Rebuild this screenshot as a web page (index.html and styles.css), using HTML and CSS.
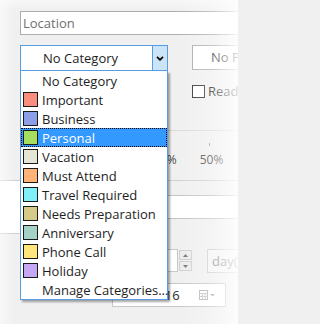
FILE: index.html
```html
<!DOCTYPE html>
<html>
<head>
<meta charset="utf-8">
<link rel="stylesheet" href="styles.css">
</head>
<body>
<div class="page">
  <div class="location">Location</div>

  <div class="row2">
    <div class="combo">
      <div class="combo-text">No Category</div>
      <div class="combo-btn">
        <svg width="8" height="5" viewBox="0 0 8 5"><path d="M1 0.8 L4 3.8 L7 0.8" fill="none" stroke="#000" stroke-width="1.8"/></svg>
      </div>
    </div>
    <div class="combo2">No Priority</div>
  </div>

  <div class="row3">
    <span class="check"></span><span class="check-label">Read</span>
  </div>

  <div class="slider">
    <div class="tick"></div>
    <div class="labels"><span class="lbl l25">25%</span><span class="lbl l50">50%</span></div>
  </div>

  <div class="notes">
    <div class="note-left"></div>
    <div class="note-right"></div>
  </div>

  <div class="spin-row">
    <div class="spin-box"></div>
    <div class="spin-btns">
      <div class="spin-btn"><svg width="5" height="3" viewBox="0 0 5 3"><path d="M0 3 L2.5 0 L5 3Z" fill="#777"/></svg></div>
      <div class="spin-btn"><svg width="5" height="3" viewBox="0 0 5 3"><path d="M0 0 L2.5 3 L5 0Z" fill="#777"/></svg></div>
    </div>
    <div class="day-box">day(s)</div>
  </div>

  <div class="date-row">
    <div class="date-box">
      <span class="date-text">6/30/2016</span>
      <span class="cal">
        <svg width="17" height="10" viewBox="0 0 17 10">
          <rect x="0.5" y="0.5" width="8" height="9" fill="#fff" stroke="#b5b5b5"/>
          <path d="M0.5 3.5h8M0.5 6.5h8M3.5 3.5v6M6 3.5v6" stroke="#c8c8c8" stroke-width="1"/>
          <path d="M11 4 L13.5 6.5 L16 4Z" fill="#b0b0b0"/>
        </svg>
      </span>
    </div>
  </div>

  <div class="dropdown">
    <div class="item"><span class="sw none"></span>No Category</div>
    <div class="item"><span class="sw c-imp"></span>Important</div>
    <div class="item"><span class="sw c-bus"></span>Business</div>
    <div class="item sel"><span class="sw c-per"></span>Personal</div>
    <div class="item"><span class="sw c-vac"></span>Vacation</div>
    <div class="item"><span class="sw c-must"></span>Must Attend</div>
    <div class="item"><span class="sw c-trav"></span>Travel Required</div>
    <div class="item"><span class="sw c-need"></span>Needs Preparation</div>
    <div class="item"><span class="sw c-ann"></span>Anniversary</div>
    <div class="item"><span class="sw c-phone"></span>Phone Call</div>
    <div class="item"><span class="sw c-hol"></span>Holiday</div>
    <div class="item"><span class="sw none"></span>Manage Categories...</div>
  </div>

  <div class="fade"></div>
</div>
</body>
</html>
```

FILE: styles.css
```css
html, body {
  margin: 0;
  padding: 0;
  background: #f0f0f0;
}
.page {
  position: relative;
  width: 238px;
  height: 324px;
  overflow: hidden;
  padding-top: 11px;
  box-sizing: border-box;
  font-family: "Open Sans", "Noto Sans", sans-serif;
  font-size: 13px;
  color: #1e1e1e;
}
.location {
  margin-left: 20px;
  width: 240px;
  height: 24px;
  box-sizing: border-box;
  border: 1px solid #abadb3;
  background: #fff;
  color: #707070;
  padding-left: 2px;
  line-height: 22px;
}
.row2 {
  display: flex;
  gap: 24px;
  margin-top: 10px;
  margin-left: 20px;
  align-items: flex-start;
}
.combo {
  display: flex;
  width: 148px;
  height: 26px;
  box-sizing: border-box;
  border: 1px solid #569de5;
  background: #fff;
  flex: none;
}
.combo-text {
  flex: 1;
  padding-left: 22px;
  line-height: 24px;
}
.combo-btn {
  width: 14px;
  border-left: 1px solid #569de5;
  background: #cce4f7;
  display: flex;
  align-items: center;
  justify-content: center;
}
.combo2 {
  flex: none;
  width: 110px;
  height: 25px;
  box-sizing: border-box;
  border: 1px solid #adadad;
  background: #fff;
  padding-left: 18px;
  line-height: 23px;
  color: #2a2a2a;
  white-space: nowrap;
  overflow: hidden;
}
.row3 {
  display: flex;
  align-items: center;
  margin-top: 13px;
  margin-left: 192px;
  height: 14px;
}
.check {
  width: 13px;
  height: 13px;
  box-sizing: border-box;
  border: 1px solid #333;
  background: #fff;
  margin-right: 3px;
  flex: none;
}
.check-label {
  line-height: 14px;
  white-space: nowrap;
}
.slider {
  margin-top: 32px;
  margin-left: 30px;
  height: 50px;
  box-sizing: border-box;
  border-top: 1px solid #dadada;
}
.tick {
  margin-left: 179px;
  margin-top: 12px;
  width: 1px;
  height: 3px;
  background: #a0a0a0;
}
.labels {
  display: flex;
  margin-top: 6px;
  font-size: 12px;
  color: #4a4a4a;
  line-height: 16px;
}
.l25 { margin-left: 123px; }
.l50 { margin-left: 23px; }
.notes {
  display: flex;
  height: 54px;
  border-top: 1px solid #d0d0d0;
}
.note-left {
  flex: none;
  width: 60px;
  height: 52px;
  background: #fff;
  border-bottom: 1px solid #d0d0d0;
}
.note-right {
  flex: none;
  margin-left: 105px;
  margin-top: 14px;
  width: 80px;
  height: 24px;
  box-sizing: border-box;
  background: #fff;
  border-top: 1px solid #c4c4c4;
  border-bottom: 1px solid #c4c4c4;
}
.spin-row {
  display: flex;
  margin-top: 14px;
  margin-left: 100px;
  height: 24px;
}
.spin-box {
  flex: none;
  width: 78px;
  height: 23px;
  box-sizing: border-box;
  border: 1px solid #c8c8c8;
  background: #fff;
}
.spin-btns {
  flex: none;
  margin-left: 1px;
  margin-top: 1px;
  display: flex;
  flex-direction: column;
  gap: 1px;
}
.spin-btn {
  width: 13px;
  height: 10px;
  box-sizing: border-box;
  border: 1px solid #cfcfcf;
  background: #ececec;
  display: flex;
  align-items: center;
  justify-content: center;
}
.day-box {
  flex: none;
  margin-left: 15px;
  width: 60px;
  height: 24px;
  box-sizing: border-box;
  border: 1px solid #cfcfcf;
  background: #f4f4f4;
  color: #8a8a8a;
  padding-left: 4px;
  line-height: 22px;
  white-space: nowrap;
  overflow: hidden;
}
.date-row {
  margin-top: 10px;
  margin-left: 112px;
}
.date-box {
  width: 114px;
  height: 24px;
  box-sizing: border-box;
  border: 1px solid #c8c8c8;
  background: #fff;
  display: flex;
  align-items: center;
  padding-left: 5px;
}
.date-text {
  flex: 1;
  color: #2a2a2a;
  line-height: 22px;
}
.cal {
  display: flex;
  margin-right: 9px;
}
.dropdown {
  position: absolute;
  left: 20px;
  top: 71px;
  width: 148px;
  box-sizing: border-box;
  border: 1px solid #569de5;
  border-top: none;
  background: #fff;
  box-shadow: 2px 2px 2px rgba(0, 0, 0, 0.35);
}
.item {
  height: 19px;
  display: flex;
  align-items: center;
  padding-left: 2px;
  white-space: nowrap;
  color: #1e1e1e;
}
.item.sel {
  background: #3399ff;
  color: #fff;
  outline: 1px dotted #000;
  outline-offset: -1px;
}
.sw {
  width: 15px;
  height: 15px;
  box-sizing: border-box;
  border: 1px solid #1a1a1a;
  margin-right: 4px;
  flex: none;
}
.sw.none { border: none; }
.c-imp { background: #fb8d80; }
.c-bus { background: #8c9fe6; }
.c-per { background: #a6df60; }
.c-vac { background: #e5e5d6; }
.c-must { background: #ffb378; }
.c-trav { background: #80f0f8; }
.c-need { background: #d5ca88; }
.c-ann { background: #a5d2c6; }
.c-phone { background: #ffe57a; }
.c-hol { background: #c6a7f3; }
.fade {
  position: absolute;
  inset: 0;
  pointer-events: none;
  background:
    linear-gradient(to right, rgba(255,255,255,0.55) 0px, rgba(255,255,255,0) 14px, rgba(255,255,255,0) 178px, rgba(255,255,255,0.3) 212px, rgba(255,255,255,0.85) 238px),
    linear-gradient(to bottom, rgba(255,255,255,0.5) 0px, rgba(255,255,255,0) 10px);
}
```
